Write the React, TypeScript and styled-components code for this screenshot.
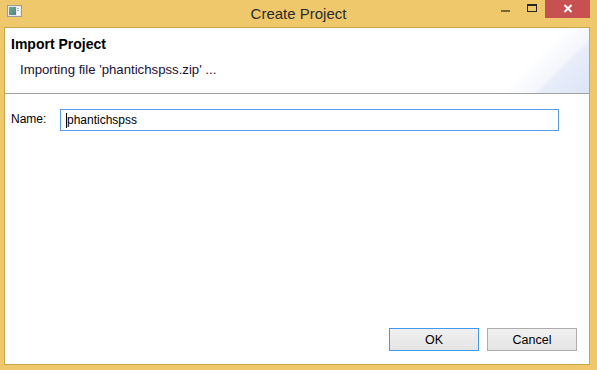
import React from "react";
import styled, { createGlobalStyle } from "styled-components";

const Global = createGlobalStyle`
  html, body { margin: 0; padding: 0; background: #EFC86B; }
  body { font-family: "Liberation Sans", Arial, sans-serif; }
`;

const Window = styled.div`
  width: 597px;
  height: 370px;
  background: #EFC86B;
  display: flex;
  flex-direction: column;
  box-sizing: border-box;
  overflow: hidden;
`;

const TitleBar = styled.div`
  height: 27px;
  flex: none;
  display: grid;
  grid-template-columns: 1fr auto 1fr;
  align-items: start;
  padding: 0 7px;
`;

const AppIcon = styled.div`
  padding-top: 5px;
  display: flex;
`;

const Title = styled.div`
  font-size: 15px;
  line-height: 27px;
  color: #2b2b2b;
  white-space: nowrap;
`;

const Controls = styled.div`
  display: flex;
  justify-content: flex-end;
  align-items: flex-start;
`;

const CtrlButton = styled.div<{ $w: number; $bg?: string }>`
  width: ${(p) => p.$w}px;
  height: 18px;
  background: ${(p) => p.$bg || "transparent"};
  display: flex;
`;

const Client = styled.div`
  flex: 1;
  margin: 0 7px 5px 4px;
  border: 1px solid #C9A84C;
  background: #fff;
  display: flex;
  flex-direction: column;
`;

const Header = styled.div`
  height: 66px;
  flex: none;
  box-sizing: border-box;
  padding: 8px 6px 0 6px;
  background: linear-gradient(135deg, #ffffff 86%, #f4f6fc 91.5%, #e8edf9 92.3%, #dce4f6 100%);
  border-bottom: 1px solid #A0A0A0;
`;

const HeaderTitle = styled.div`
  font-size: 14px;
  font-weight: bold;
  line-height: 16px;
  color: #000;
`;

const HeaderDesc = styled.div`
  margin-top: 10px;
  margin-left: 9px;
  font-size: 13.2px;
  line-height: 16px;
  color: #1a0f33;
`;

const Body = styled.div`
  flex: 1;
  padding: 15px 30px 0 6px;
`;

const FieldRow = styled.div`
  display: flex;
  align-items: center;
`;

const Label = styled.div`
  width: 49px;
  font-size: 12px;
  color: #000;
  padding-bottom: 2px;
`;

const TextBox = styled.div`
  flex: 1;
  height: 22px;
  box-sizing: border-box;
  border: 1px solid #569DE5;
  display: flex;
  align-items: center;
  padding-left: 5px;
  font-size: 12px;
  color: #000;
`;

const Caret = styled.span`
  width: 1px;
  height: 15px;
  background: #000;
`;

const Footer = styled.div`
  display: flex;
  justify-content: flex-end;
  gap: 8px;
  padding: 0 12px 13px 0;
`;

const Button = styled.div<{ $default?: boolean }>`
  width: 90px;
  height: 23px;
  box-sizing: border-box;
  border: 1px solid ${(p) => (p.$default ? "#3C9BEA" : "#ACACAC")};
  background: linear-gradient(#F0F0F0, #E5E5E5);
  display: flex;
  align-items: center;
  justify-content: center;
  font-size: 12.5px;
  color: #000;
`;

export default function App() {
  return (
    <>
      <Global />
      <Window>
        <TitleBar>
          <AppIcon>
            <svg width="15" height="12" viewBox="0 0 15 12">
              <defs>
                <linearGradient id="ig" x1="0" y1="0" x2="1" y2="1">
                  <stop offset="0" stopColor="#6fa3c8" />
                  <stop offset="0.5" stopColor="#5f9a7a" />
                  <stop offset="1" stopColor="#4a7fb8" />
                </linearGradient>
              </defs>
              <rect x="0.5" y="0.5" width="14" height="11" fill="#e8e8e8" stroke="#9c9c9c" />
              <rect x="2" y="2" width="7" height="8" fill="url(#ig)" />
              <rect x="10" y="2" width="3" height="8" fill="#f7f7f7" />
              <rect x="10" y="3" width="2" height="1" fill="#9bb7c9" />
              <rect x="10" y="5" width="2" height="1" fill="#9bb7c9" />
            </svg>
          </AppIcon>
          <Title>Create Project</Title>
          <Controls>
            <CtrlButton $w={26}>
              <svg width="26" height="18" viewBox="0 0 26 18">
                <rect x="9" y="10" width="9" height="2" fill="#7A6738" />
              </svg>
            </CtrlButton>
            <CtrlButton $w={27}>
              <svg width="27" height="18" viewBox="0 0 27 18">
                <rect x="9.5" y="4.5" width="9" height="7" fill="none" stroke="#262626" />
                <rect x="9" y="4" width="10" height="2" fill="#262626" />
              </svg>
            </CtrlButton>
            <CtrlButton $w={45} $bg="#C75050">
              <svg width="45" height="18" viewBox="0 0 45 18">
                <path d="M19.5 5 L26.5 12 M26.5 5 L19.5 12" stroke="#fff" strokeWidth="2" />
              </svg>
            </CtrlButton>
          </Controls>
        </TitleBar>
        <Client>
          <Header>
            <HeaderTitle>Import Project</HeaderTitle>
            <HeaderDesc>Importing file 'phantichspss.zip' ...</HeaderDesc>
          </Header>
          <Body>
            <FieldRow>
              <Label>Name:</Label>
              <TextBox>
                <Caret />
                phantichspss
              </TextBox>
            </FieldRow>
          </Body>
          <Footer>
            <Button $default>OK</Button>
            <Button>Cancel</Button>
          </Footer>
        </Client>
      </Window>
    </>
  );
}
